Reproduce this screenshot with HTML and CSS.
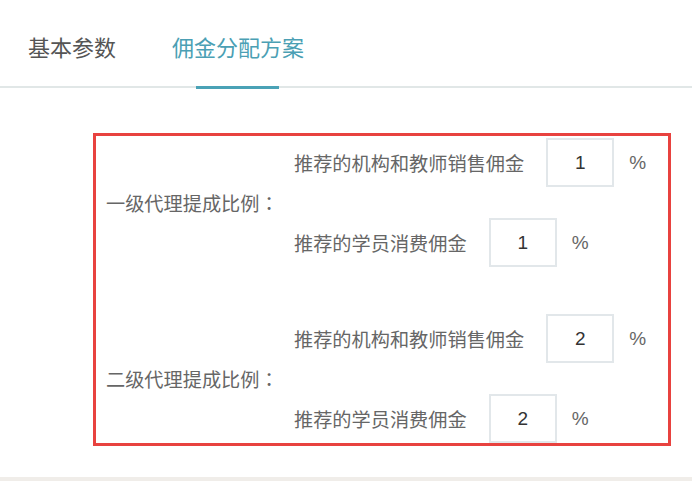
FILE: index.html
```html
<!DOCTYPE html>
<html lang="zh-CN">
<head>
  <meta charset="UTF-8" />
  <meta name="viewport" content="width=device-width, initial-scale=1.0" />
  <title>佣金分配方案</title>
  <link rel="stylesheet" href="styles.css">
</head>
<body>

  <div class="page">
    <div class="tabs">
      <div class="tab">基本参数</div>
      <div class="tab active">佣金分配方案</div>
    </div>

    <div class="content">
      <div class="ratio-box">
        <div class="group">
          <div class="group-label">一级代理提成比例<span class="colon" lang="ja">：</span></div>
          <div class="group-rows">
            <div class="row">
              <span class="row-label">推荐的机构和教师销售佣金</span>
              <input class="num" type="text" value="1">
              <span class="unit">%</span>
            </div>
            <div class="row">
              <span class="row-label">推荐的学员消费佣金</span>
              <input class="num" type="text" value="1">
              <span class="unit">%</span>
            </div>
          </div>
        </div>

        <div class="group">
          <div class="group-label">二级代理提成比例<span class="colon" lang="ja">：</span></div>
          <div class="group-rows">
            <div class="row">
              <span class="row-label">推荐的机构和教师销售佣金</span>
              <input class="num" type="text" value="2">
              <span class="unit">%</span>
            </div>
            <div class="row">
              <span class="row-label">推荐的学员消费佣金</span>
              <input class="num" type="text" value="2">
              <span class="unit">%</span>
            </div>
          </div>
        </div>
      </div>
    </div>
  </div>

</body>
</html>
```

FILE: styles.css
```css
* {
  margin: 0;
  padding: 0;
  box-sizing: border-box;
}

html, body {
  width: 100%;
  height: 100%;
  background-color: #fff;
  font-family: "Liberation Sans", "Noto Sans CJK SC", sans-serif;
  overflow: hidden;
}

.page {
  height: 477px;
  border-bottom: 4px solid #f0ede9;
  box-sizing: content-box;
}

.tabs {
  display: flex;
  gap: 56px;
  height: 88px;
  padding-left: 28px;
  border-bottom: 2px solid #e1e7e7;
}

.tab {
  position: relative;
  padding-top: 33px;
  font-size: 22px;
  line-height: 32px;
  color: #555;
}

.tab.active {
  color: #4b9fb4;
}

.tab.active::after {
  content: "";
  position: absolute;
  left: 24px;
  right: 25px;
  bottom: -3px;
  height: 3px;
  background-color: #4aa2b6;
}

.content {
  padding-top: 45px;
  padding-left: 93px;
}

.ratio-box {
  width: 578px;
  border: 3px solid #e8423f;
  padding: 2px 0 0;
  display: flex;
  flex-direction: column;
  gap: 47px;
}

.group {
  display: flex;
  align-items: center;
}

.group-label {
  width: 198px;
  padding-left: 10px;
  font-size: 19.2px;
  color: #666;
}

.colon {
  font-family: "Noto Sans CJK JP", sans-serif;
}

.group-rows {
  display: flex;
  flex-direction: column;
  gap: 31px;
}

.row {
  display: flex;
  align-items: center;
  height: 49px;
  font-size: 19.2px;
  color: #666;
}

.row-label {
  margin-right: 22px;
}

.num {
  width: 68px;
  height: 49px;
  border: 2px solid #e2e7ea;
  background: #fff;
  text-align: center;
  font-family: "Liberation Sans", sans-serif;
  font-size: 19px;
  color: #333;
  outline: none;
}

.unit {
  margin-left: 15px;
  font-size: 19px;
  color: #666;
}
```
